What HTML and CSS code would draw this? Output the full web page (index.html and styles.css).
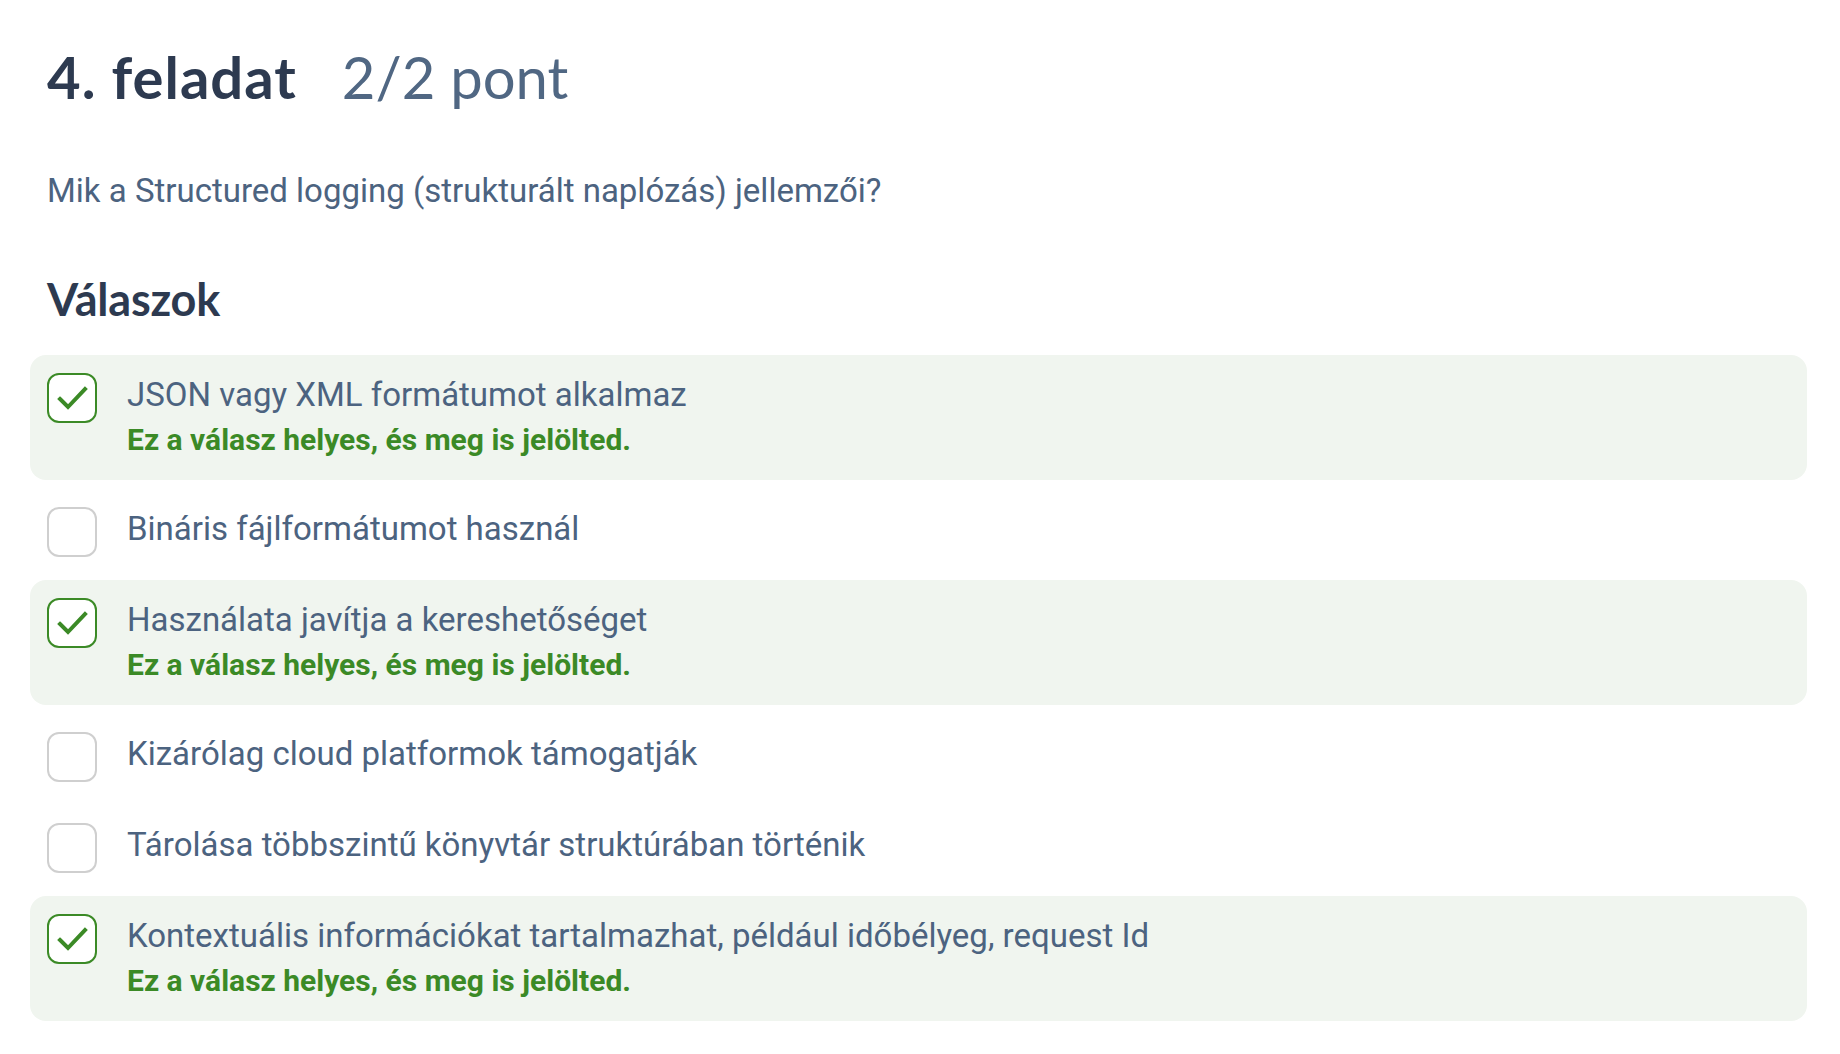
FILE: index.html
```html
<!DOCTYPE html>
<html lang="hu">
<head>
<meta charset="utf-8">
<title>4. feladat</title>
<link rel="stylesheet" href="styles.css">
</head>
<body>
<main class="page">
  <header class="task-header">
    <h1 class="task-title">4. feladat</h1>
    <span class="task-score">2/2 pont</span>
  </header>
  <p class="question">Mik a Structured logging (strukturált naplózás) jellemzői?</p>
  <h2 class="answers-title">Válaszok</h2>
  <ul class="answers">
    <li class="answer answer--correct">
      <span class="checkbox checkbox--checked"><svg viewBox="0 0 50 50" class="check"><polyline points="13,26 21,34 38,16"/></svg></span>
      <div class="answer-body">
        <div class="answer-text">JSON vagy XML formátumot alkalmaz</div>
        <div class="feedback">Ez a válasz helyes, és meg is jelölted.</div>
      </div>
    </li>
    <li class="answer">
      <span class="checkbox"></span>
      <div class="answer-body">
        <div class="answer-text">Bináris fájlformátumot használ</div>
      </div>
    </li>
    <li class="answer answer--correct">
      <span class="checkbox checkbox--checked"><svg viewBox="0 0 50 50" class="check"><polyline points="13,26 21,34 38,16"/></svg></span>
      <div class="answer-body">
        <div class="answer-text">Használata javítja a kereshetőséget</div>
        <div class="feedback">Ez a válasz helyes, és meg is jelölted.</div>
      </div>
    </li>
    <li class="answer">
      <span class="checkbox"></span>
      <div class="answer-body">
        <div class="answer-text">Kizárólag cloud platformok támogatják</div>
      </div>
    </li>
    <li class="answer">
      <span class="checkbox"></span>
      <div class="answer-body">
        <div class="answer-text">Tárolása többszintű könyvtár struktúrában történik</div>
      </div>
    </li>
    <li class="answer answer--correct">
      <span class="checkbox checkbox--checked"><svg viewBox="0 0 50 50" class="check"><polyline points="13,26 21,34 38,16"/></svg></span>
      <div class="answer-body">
        <div class="answer-text">Kontextuális információkat tartalmazhat, például időbélyeg, request Id</div>
        <div class="feedback">Ez a válasz helyes, és meg is jelölted.</div>
      </div>
    </li>
  </ul>
</main>
</body>
</html>
```
FILE: styles.css
```css
* { box-sizing: border-box; }

html, body {
  margin: 0;
  padding: 0;
  background: #ffffff;
}

.page {
  padding: 42px 33px 0 30px;
  font-family: Roboto, "Liberation Sans", sans-serif;
}

.task-header {
  display: flex;
  align-items: baseline;
  gap: 45px;
  padding-left: 17px;
  height: 70px;
}

.task-title {
  margin: 0;
  font-family: Lato, "Noto Sans", sans-serif;
  font-weight: 700;
  font-size: 58px;
  line-height: 70px;
  letter-spacing: 1px;
  color: #2d3a50;
}

.task-score {
  font-family: Lato, "Noto Sans", sans-serif;
  font-weight: 400;
  font-size: 58px;
  line-height: 70px;
  color: #506783;
}

.question {
  margin: 59px 0 0 0;
  padding-left: 17px;
  font-size: 33px;
  line-height: 40px;
  color: #4c6380;
}

.answers-title {
  margin: 60px 0 0 0;
  padding-left: 17px;
  font-family: Lato, "Noto Sans", sans-serif;
  font-weight: 700;
  font-size: 45px;
  line-height: 56px;
  letter-spacing: -0.2px;
  color: #2d3a50;
}

.answers {
  list-style: none;
  margin: 28px 0 0 0;
  padding: 0;
  display: flex;
  flex-direction: column;
  gap: 9px;
}

.answer {
  display: flex;
  align-items: flex-start;
  gap: 30px;
  padding: 18px 17px 14px 17px;
  border-radius: 16px;
}

.answer--correct {
  background: #f0f5ef;
}

.checkbox {
  flex: 0 0 50px;
  width: 50px;
  height: 50px;
  border: 2px solid #cfcfcf;
  border-radius: 12px;
  background: #ffffff;
  position: relative;
}

.checkbox--checked {
  border-color: #3b8a26;
}

.check {
  position: absolute;
  left: -2px;
  top: -2px;
  width: 50px;
  height: 50px;
  fill: none;
  stroke: #3b8a26;
  stroke-width: 4;
  stroke-linecap: square;
  stroke-linejoin: miter;
}

.answer-body {
  display: flex;
  flex-direction: column;
}

.answer-text {
  font-size: 33px;
  line-height: 44px;
  color: #4c6380;
}

.feedback {
  font-size: 30px;
  line-height: 46px;
  margin-bottom: 3px;
  font-weight: 700;
  color: #3b8a26;
}
```
